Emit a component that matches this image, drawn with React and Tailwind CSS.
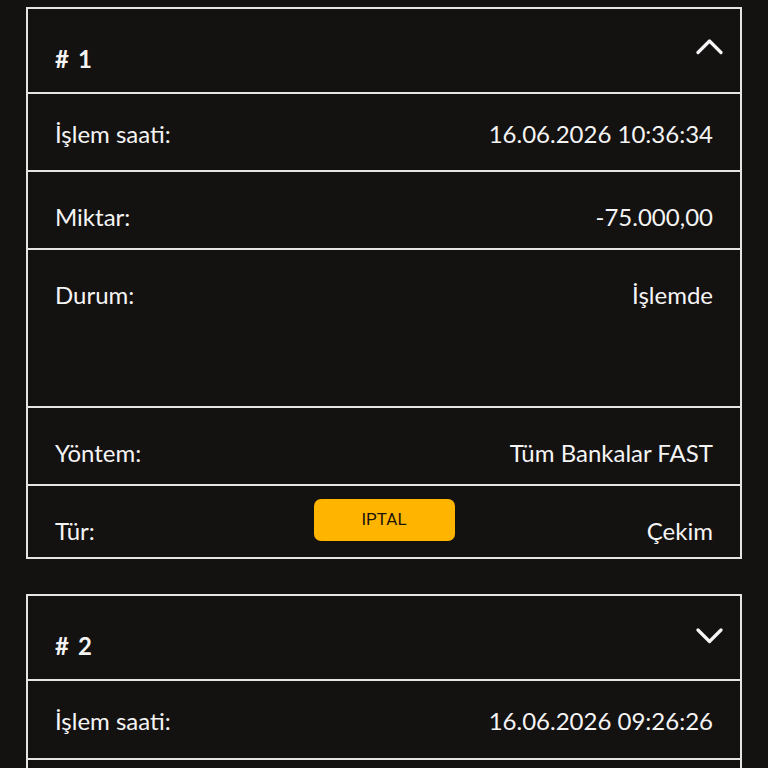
import React from "react";

function Chevron({ up }) {
  return (
    <svg width="27" height="17" viewBox="0 0 27 17" fill="none" className="block">
      <polyline
        points={up ? "2,14.5 13.5,3 25,14.5" : "2,3 13.5,14.5 25,3"}
        stroke="#f5f5f5"
        strokeWidth="3.2"
        strokeLinecap="round"
        strokeLinejoin="round"
      />
    </svg>
  );
}

function Row({ label, value, h, pt, last, children }) {
  return (
    <div
      className={`grid grid-cols-[1fr_auto_1fr] px-[27px] ${h} ${last ? "" : "border-b-2 border-[#e4e4e4]"}`}
    >
      <div className={`${pt} leading-[30px] whitespace-nowrap`}>{label}</div>
      <div>{children}</div>
      <div className={`${pt} leading-[30px] text-right whitespace-nowrap`}>{value}</div>
    </div>
  );
}

function Card({ num, up, rows, className }) {
  return (
    <div className={`mx-[26px] border-2 border-[#e4e4e4] ${className}`}>
      <div className="h-[85px] border-b-2 border-[#e4e4e4] flex justify-between items-start pl-[27px] pr-[17px]">
        <div className="pt-[35px] leading-[30px] font-bold flex gap-[9px]">
          <span>#</span>
          <span>{num}</span>
        </div>
        <div className={up ? "mt-[29px]" : "mt-[31px]"}>
          <Chevron up={up} />
        </div>
      </div>
      {rows}
    </div>
  );
}

function Iptal() {
  return (
    <div
      className="mt-[13px] w-[141px] h-[42px] rounded-[7px] bg-[#ffb400] flex items-center justify-center text-[#1c1408] text-[17px]"
      style={{ fontFamily: "Roboto, 'Liberation Sans', sans-serif" }}
    >
      IPTAL
    </div>
  );
}

export default function App() {
  return (
    <div
      className="h-[768px] overflow-hidden bg-[#141111] text-[#f4f4f4] text-[24px] pt-[7px]"
      style={{ fontFamily: "Lato, 'Noto Sans', sans-serif" }}
    >
      <Card
        num={1}
        up
        rows={
          <>
            <Row label="İşlem saati:" value="16.06.2026 10:36:34" h="h-[78px]" pt="pt-[25px]" />
            <Row label="Miktar:" value="-75.000,00" h="h-[78px]" pt="pt-[30px]" />
            <Row label="Durum:" value="İşlemde" h="h-[158px]" pt="pt-[30px]" />
            <Row label="Yöntem:" value="Tüm Bankalar FAST" h="h-[78px]" pt="pt-[30px]" />
            <Row label="Tür:" value="Çekim" h="h-[71px]" pt="pt-[30px]" last>
              <Iptal />
            </Row>
          </>
        }
      />
      <Card
        num={2}
        className="mt-[35px]"
        rows={
          <>
            <Row label="İşlem saati:" value="16.06.2026 09:26:26" h="h-[79px]" pt="pt-[25px]" />
            <div className="h-[78px]" />
          </>
        }
      />
    </div>
  );
}
